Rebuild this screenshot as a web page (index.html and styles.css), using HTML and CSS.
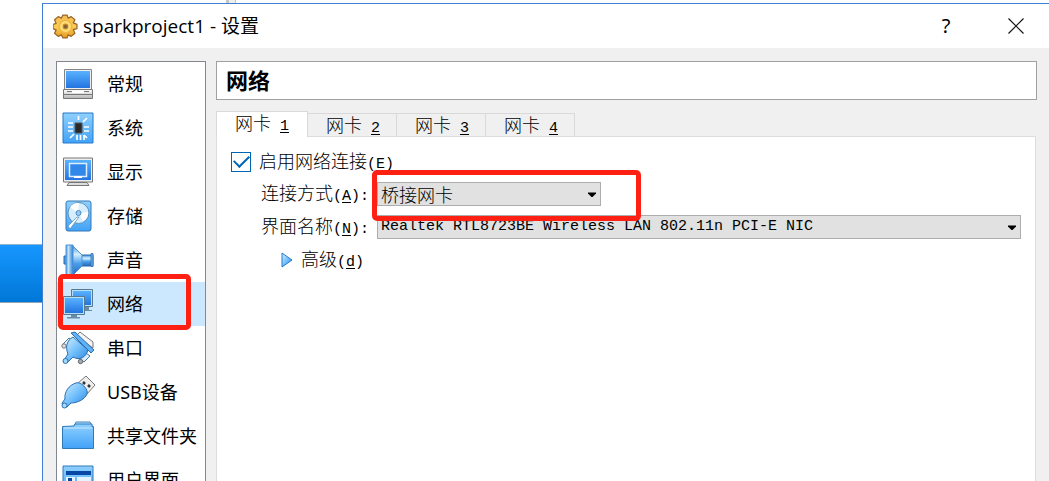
FILE: index.html
```html
<!DOCTYPE html>
<html lang="zh-CN">
<head>
<meta charset="utf-8">
<title>sparkproject1 - 设置</title>
<link rel="stylesheet" href="styles.css">
</head>
<body>
<svg class="defs" aria-hidden="true">
  <defs>
    <linearGradient id="blue" x1="0" y1="0" x2="0" y2="1"><stop offset="0" stop-color="#59b2ff"/><stop offset="1" stop-color="#2374e0"/></linearGradient>
    <linearGradient id="sky" x1="0" y1="0" x2="0" y2="1"><stop offset="0" stop-color="#8fd0ff"/><stop offset="1" stop-color="#42a2f7"/></linearGradient>
    <linearGradient id="shine" x1="0" y1="0" x2="1" y2="1"><stop offset="0" stop-color="#d8f0ff"/><stop offset=".55" stop-color="#6bbcfb"/><stop offset="1" stop-color="#2b7fd8"/></linearGradient>
    <linearGradient id="cone" x1="0" y1="0" x2="0" y2="1"><stop offset="0" stop-color="#3d8fdd"/><stop offset=".3" stop-color="#d5efff"/><stop offset=".6" stop-color="#4a9deb"/><stop offset="1" stop-color="#2468b5"/></linearGradient>
    <linearGradient id="horn" x1="0" y1="0" x2="1" y2="0"><stop offset="0" stop-color="#4a9deb"/><stop offset=".35" stop-color="#c2e4fc"/><stop offset="1" stop-color="#2d7fd4"/></linearGradient>
    <linearGradient id="metal" x1="0" y1="0" x2="0" y2="1"><stop offset="0" stop-color="#ffffff"/><stop offset="1" stop-color="#b5b5b5"/></linearGradient>
    <linearGradient id="gold" x1="0" y1="0" x2="0" y2="1"><stop offset="0" stop-color="#f4bd55"/><stop offset=".5" stop-color="#f8cc55"/><stop offset="1" stop-color="#e69b20"/></linearGradient>
  </defs>
</svg>
<div class="desktop">
  <aside class="backdrop"><div class="backdrop-selection"></div></aside>
  <div class="stage">
    <div class="backdrop-top"><span class="backdrop-edge"></span></div>
    <section class="window">
      <header class="titlebar">
        <svg class="gear" viewBox="0 0 24 24" aria-hidden="true">
          <path d="M9.500 1h4l1 3 3-1.500 3.500 3-1.500 3 3.500 1.500v4l-3.500 1 1.500 3.500-3.500 3-3-1.500-1 3h-4l-1.500-3-3 1.500-3.500-3 1.500-3-3-1.500v-4l3-1-1.500-3.500 3.500-3 3 1.500z" fill="url(#gold)" stroke="#9a6425" stroke-width="1.200" stroke-linejoin="round"/>
          <circle cx="12" cy="12" r="6" fill="#ffdd79" stroke="#f3b843" stroke-width="1.500"/>
          <circle cx="12" cy="12" r="2.300" fill="#806335" stroke="#c78a24"/>
        </svg>
        <h1 class="title">sparkproject1 - 设置</h1>
        <button class="title-button" type="button" aria-label="帮助">?</button>
        <button class="title-button" type="button" aria-label="关闭">
          <svg class="close" viewBox="0 0 16 16"><path d="M.5.5l15 15M15.5.5l-15 15" fill="none" stroke="#111" stroke-width="1.200"/></svg>
        </button>
      </header>
      <div class="content">
        <nav class="sidebar" aria-label="设置">
          <button class="item" type="button">
            <svg class="icon" viewBox="0 0 32 32"><path d="M2.500 1.500h27v20h-27z" fill="#eee" stroke="#858585"/><path d="M4 3h24v17H4z" fill="url(#blue)"/><path d="M1.500 21.500h29v9h-29z" fill="url(#metal)" stroke="#777"/><path d="M5 23.500h22M2 26.500h28" stroke="#777"/><path d="M10 24h12" stroke="#fff" stroke-width="2"/></svg>
            <span>常规</span>
          </button>
          <button class="item" type="button">
            <svg class="icon" viewBox="0 0 32 32"><path d="M1 1h30v30H1z" fill="url(#sky)" stroke="#2779c8"/><path d="M13 11h7v10h-7z" fill="#282828" stroke="#555"/><path d="M16.500 4v4M25 6l-4 4M6 11h5M6 15h5M6 19h5M22 15h5M22 19h5M8 26l4-4M15 23v5M18.500 23v5M22 23v5M25 26l-3-3" stroke="#fff" stroke-width="1.700"/></svg>
            <span>系统</span>
          </button>
          <button class="item" type="button">
            <svg class="icon" viewBox="0 0 32 32"><path d="M1.500 2h29v24h-29z" fill="#eee" stroke="#777"/><path d="M3 4h26v20H3z" fill="url(#blue)"/><path d="M7.500 7.500h17v13h-17z" fill="#3188e8" stroke="#dcefff" stroke-width="1.500"/><path d="M12 21h8" stroke="#fff" stroke-width="2"/><path d="M7 26.500h18l2 3H5z" fill="#ddd" stroke="#777"/></svg>
            <span>显示</span>
          </button>
          <button class="item" type="button">
            <svg class="icon" viewBox="0 0 32 32"><rect x="4" y="1" width="25" height="30" rx="2" fill="url(#sky)" stroke="#3279b8"/><circle cx="16.500" cy="13" r="10.500" fill="#d7eefd" stroke="#5892c4"/><path d="M16 13L8 7a10 10 0 0 1 9-4zM17 13l9-1a10 10 0 0 1-5 9z" fill="#fff"/><circle cx="16.500" cy="13" r="2.500" fill="#9dc9ee" stroke="#4b8dc5"/><path d="M17 17L8 29l-2-3 9-9z" fill="#fff" stroke="#5b94c3" stroke-width=".8"/></svg>
            <span>存储</span>
          </button>
          <button class="item" type="button">
            <svg class="icon" viewBox="0 0 32 32"><path d="M2 12h4v8H2z" fill="#4a9deb" stroke="#2969a9"/><path d="M19 11h12v11H19z" fill="url(#cone)" stroke="#2969a9"/><path d="M10 1l10 10v11L10 32z" fill="url(#cone)" stroke="#4f93d2"/><path d="M4 1h7v31H4z" fill="url(#horn)" stroke="#4f93d2"/><path d="M29 9.500h2v13h-2z" fill="#67b4f5" stroke="#2969a9" stroke-width=".8"/></svg>
            <span>声音</span>
          </button>
          <button class="item selected" type="button" aria-current="page">
            <svg class="icon" viewBox="0 0 32 32"><path d="M9.500 1.500h21v17h-21z" fill="#b8dff4" stroke="#557b91"/><path d="M11 3h18v14H11z" fill="url(#blue)"/><path d="M20 19h7v3h3v1H18z" fill="#668da5"/><path d="M1.500 8.500h21v18h-21z" fill="#b8dff4" stroke="#557b91"/><path d="M3 10h18v15H3z" fill="url(#blue)"/><path d="M9 27h6v2h3v1.500H5V29h4z" fill="#668da5"/></svg>
            <span>网络</span>
            <span class="highlight highlight-item"></span>
          </button>
          <button class="item" type="button">
            <svg class="icon" viewBox="0 0 32 32"><path d="M18 0l13 10v6L14 4z" fill="#f4f4f4" stroke="#777"/><path d="M1 12l6-6 4 3-7 6z" fill="#eef7ff" stroke="#48779f"/><circle cx="2" cy="14" r="2.200" fill="#ddd" stroke="#777"/><path d="M18 27l6-6 4 3-6 6z" fill="#d9edfc" stroke="#48779f"/><circle cx="18.500" cy="29.500" r="2.200" fill="#aaa" stroke="#666"/><path d="M11 5l15 13c-2 7-8 11-15 7l-5 5-4-2 4-6C3 15 5 8 11 5z" fill="url(#shine)" stroke="#286faf"/><path d="M9 1l4-1 19 18-3 3z" fill="#62b1f4" stroke="#286faf" stroke-linejoin="round"/><circle cx="3.500" cy="29" r="2.500" fill="#a9d8ff" stroke="#286faf"/></svg>
            <span>串口</span>
          </button>
          <button class="item" type="button">
            <svg class="icon" viewBox="0 0 32 32"><path d="M24 0l9 9-8 9-10-10z" fill="#eee" stroke="#777" stroke-linejoin="round"/><path d="M21 6l2 2M26 9l2 2" stroke="#333" stroke-width="2.500"/><path d="M14 7c4-2 13 6 11 11-2 5-9 9-16 9l-4 4-4-1-1-3 3-4C2 16 7 9 14 7z" fill="url(#shine)" stroke="#286faf"/><circle cx="2.500" cy="29.500" r="2.500" fill="#a9d8ff" stroke="#286faf"/></svg>
            <span>USB设备</span>
          </button>
          <button class="item" type="button">
            <svg class="icon" viewBox="0 0 32 32"><path d="M12 6l2-4h14l2 4z" fill="#b9e2ff" stroke="#4184bd"/><path d="M.500 6.500L12 6l1-2h17v2.500h1.500v22H.500z" fill="url(#sky)" stroke="#317ab9"/><path d="M2 8h28" stroke="#c7e9ff"/></svg>
            <span>共享文件夹</span>
          </button>
          <button class="item" type="button">
            <svg class="icon" viewBox="0 0 32 32"><path d="M1 2h30v29H1z" fill="url(#sky)" stroke="#317ab9"/><path d="M4 7h25v4H4z" fill="#0748a5"/><path d="M4 13h9v14H4zM15 13h14v14H15z" fill="#e4f3ff"/><path d="M6 14h4v12H6z" fill="#0748a5"/></svg>
            <span>用户界面</span>
          </button>
        </nav>
        <main class="main">
          <h2 class="heading">网络</h2>
          <div class="tabs" role="tablist">
            <button class="tab active" type="button" role="tab" aria-selected="true">网卡<span class="latin"><u>1</u></span></button>
            <button class="tab" type="button" role="tab" aria-selected="false">网卡<span class="latin"><u>2</u></span></button>
            <button class="tab" type="button" role="tab" aria-selected="false">网卡<span class="latin"><u>3</u></span></button>
            <button class="tab" type="button" role="tab" aria-selected="false">网卡<span class="latin"><u>4</u></span></button>
          </div>
          <form class="panel">
            <div class="check-row">
              <input class="check" type="checkbox" id="enable" checked>
              <label for="enable">启用网络连接<span class="latin">(<u>E</u>)</span></label>
            </div>
            <div class="field">
              <label for="mode">连接方式<span class="latin">(<u>A</u>):</span></label>
              <div class="combo combo-short">
                <select id="mode"><option>桥接网卡</option></select>
                <svg class="arrow" viewBox="0 0 8 5" aria-hidden="true"><path d="M0 .500h8v1L4.500 5h-1L0 1.500z"/></svg>
                <span class="highlight highlight-combo"></span>
              </div>
            </div>
            <div class="field">
              <label for="adapter">界面名称<span class="latin">(<u>N</u>):</span></label>
              <div class="combo">
                <select id="adapter" class="latin"><option>Realtek RTL8723BE Wireless LAN 802.11n PCI-E NIC</option></select>
                <svg class="arrow" viewBox="0 0 8 5" aria-hidden="true"><path d="M0 .500h8v1L4.500 5h-1L0 1.500z"/></svg>
              </div>
            </div>
            <button class="advanced" type="button">
              <svg class="triangle" viewBox="0 0 12 16" aria-hidden="true"><path d="M1 1l10 7-10 7z" fill="url(#shine)" stroke="#2478cc" stroke-linejoin="round"/></svg>
              <span>高级<span class="latin">(<u>d</u>)</span></span>
            </button>
          </form>
        </main>
      </div>
    </section>
  </div>
</div>
</body>
</html>
```
FILE: styles.css
```css
* { box-sizing: border-box; }

body {
  margin: 0;
  background: #fff;
  color: #000;
  font: 18px/24px "Noto Sans", "Noto Sans CJK SC", sans-serif;
}

button, select, input { font: inherit; color: inherit; }
button { margin: 0; padding: 0; border: 0; background: none; text-align: left; }
.defs { position: absolute; width: 0; height: 0; }

.desktop { display: flex; height: 100vh; overflow: hidden; }
.backdrop { flex: none; width: 42px; padding-top: 244px; }
.backdrop-selection {
  height: 59px;
  border-top: 1px solid #8fb5d2;
  border-bottom: 1px solid #8fa5b5;
  background: linear-gradient(#1797ff, #0077d7);
}
.stage { flex: 1; min-width: 0; display: flex; flex-direction: column; }
.backdrop-top { flex: none; height: 3px; padding-left: 184px; }
.backdrop-edge { display: block; width: 10px; height: 3px; border: solid #c5c5c5; border-width: 0 1px 0 3px; background: #eee; }

.window {
  flex: 1;
  min-height: 0;
  display: flex;
  flex-direction: column;
  border: solid #3f7fd1;
  border-width: 1px 0 0 1px;
  background: #f0f0f0;
}
.titlebar {
  flex: none;
  display: flex;
  align-items: center;
  height: 44px;
  padding-left: 10px;
  background: #fff;
}
.gear { width: 25px; height: 25px; margin-right: 5px; }
.title { flex: 1; margin: 0; font-family: "Open Sans", "Noto Sans CJK SC", sans-serif; font-size: 19px; font-weight: 400; }
.title-button { display: grid; place-items: center; width: 70px; height: 44px; padding-left: 4px; font-size: 20px; }
.close { width: 16px; height: 16px; }

.content { flex: 1; min-height: 0; display: flex; gap: 10px; padding: 13px 12px 0 13px; }

.sidebar {
  flex: none;
  width: 150px;
  border: 1px solid #828790;
  border-bottom: 0;
  background: #fff;
}
.item {
  position: relative;
  display: flex;
  align-items: center;
  gap: 13px;
  width: 100%;
  height: 44px;
  padding-left: 5px;
  white-space: nowrap;
}
.item.selected { background: #cce8ff; }
.icon { flex: none; width: 32px; height: 32px; overflow: visible; }

.highlight { position: absolute; z-index: 1; border: 5px solid #ff2014; border-radius: 5px; pointer-events: none; }
.highlight-item { inset: -8px 14px -4px 1px; }
.highlight-combo { inset: -12px -40px -15px -5px; }

.main {
  flex: 1;
  min-width: 0;
  display: flex;
  flex-direction: column;
  font-family: "Noto Sans CJK SC", sans-serif;
  font-weight: 300;
}
.heading {
  flex: none;
  margin: 0 0 11px;
  padding: 5px 9px 8px;
  border: 1px solid #a0a0a0;
  background: #fff;
  font-size: 22px;
  line-height: 24px;
}
.tabs { flex: none; display: flex; align-items: flex-end; height: 25px; }
.tab {
  display: flex;
  gap: 9px;
  align-items: baseline;
  width: 89px;
  height: 23px;
  padding-left: 18px;
  border: 1px solid #d9d9d9;
  border-width: 1px 1px 0 0;
  line-height: 20px;
}
.tab.active { width: 92px; height: 26px; margin-bottom: -1px; border-width: 1px 1px 0; background: #fff; z-index: 1; }
.latin { font-family: "Liberation Mono", monospace; font-size: 15px; }
u { text-underline-offset: 2px; }

.panel {
  flex: 1;
  min-height: 0;
  margin-right: 1px;
  padding: 13px 14px 0;
  border: 1px solid #dcdcdc;
  border-bottom: 0;
  background: #fff;
}
.check-row { display: flex; align-items: center; gap: 8px; height: 24px; margin-bottom: 8px; }
.check-row label, .field label, .advanced span { line-height: 24px; }
.check {
  appearance: none;
  display: grid;
  place-items: center;
  width: 20px;
  height: 20px;
  margin: 0;
  border: 1px solid #0066b4;
  background: #fff;
}
.check:checked::before {
  content: "";
  width: 13px;
  height: 7px;
  margin-bottom: 5px;
  border: solid #0066b4;
  border-width: 0 0 2px 2px;
  transform: rotate(-45deg);
}
.field { display: flex; align-items: center; height: 24px; margin-bottom: 9px; padding-left: 30px; }
.field label { flex: none; width: 116px; white-space: nowrap; }
.combo { position: relative; flex: 1; min-width: 0; }
.combo-short { flex: 0 1 224px; }
.combo select {
  appearance: none;
  display: block;
  width: 100%;
  height: 24px;
  padding: 0 24px 0 3px;
  border: 1px solid #adadad;
  border-radius: 0;
  background: #e1e1e1;
  line-height: 20px;
}
.combo select.latin { font-family: "Liberation Mono", monospace; font-size: 15px; }
.arrow { position: absolute; top: 10px; right: 5px; width: 8px; height: 5px; pointer-events: none; }
.advanced { display: flex; align-items: center; gap: 8px; height: 24px; padding-left: 50px; }
.triangle { width: 12px; height: 16px; }
```
